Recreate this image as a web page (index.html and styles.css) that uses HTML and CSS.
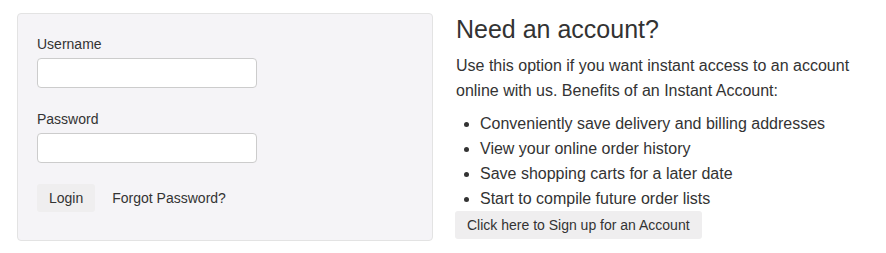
FILE: index.html
```html
<!DOCTYPE html>
<html lang="en">

<head>
  <meta charset="UTF-8">
  <meta name="viewport" content="width=device-width, initial-scale=1.0">
  <title>Login</title>
  <link rel="stylesheet" href="styles.css">
</head>

<body>
  <div class="page">
    <form class="login-box" onsubmit="return false">
      <div class="form-group">
        <label for="username">Username</label>
        <input type="text" id="username" name="username">
      </div>

      <div class="form-group">
        <label for="password">Password</label>
        <input type="password" id="password" name="password">
      </div>

      <div class="actions">
        <button type="submit" class="btn">Login</button>
        <a href="#" class="forgot">Forgot Password?</a>
      </div>
    </form>

    <div class="signup">
      <h2>Need an account?</h2>
      <p>Use this option if you want instant access to an account online with us. Benefits of an Instant Account:</p>
      <ul>
        <li>Conveniently save delivery and billing addresses</li>
        <li>View your online order history</li>
        <li>Save shopping carts for a later date</li>
        <li>Start to compile future order lists</li>
      </ul>
      <button type="button" class="btn btn-signup">Click here to Sign up for an Account</button>
    </div>
  </div>
</body>

</html>
```

FILE: styles.css
```css
body {
  margin: 0;
  padding: 0;
  font-family: "Liberation Sans", Arial, sans-serif;
  color: #333;
  background-color: #fff;
}

.page {
  display: flex;
  align-items: flex-start;
  padding: 13px 0 0 17px;
}

/* left panel */
.login-box {
  width: 375px;
  padding: 20px 20px 28px 19px;
  background-color: #f5f4f7;
  border: 1px solid #e3e3e3;
  border-radius: 4px;
}

.form-group {
  margin-bottom: 21px;
}

.form-group label {
  display: block;
  font-size: 14px;
  line-height: 20px;
  margin-bottom: 4px;
}

.form-group input {
  display: block;
  box-sizing: border-box;
  width: 220px;
  height: 30px;
  padding: 4px 8px;
  border: 1px solid #ccc;
  border-radius: 4px;
  background-color: #fff;
  font-size: 14px;
}

.actions {
  display: flex;
  align-items: center;
  gap: 17px;
}

.btn {
  font-family: "Liberation Sans", Arial, sans-serif;
  font-size: 14px;
  color: #333;
  height: 28px;
  padding: 0 12px;
  border: none;
  border-radius: 3px;
  background-color: #efeeef;
  cursor: pointer;
}

.forgot {
  font-size: 14px;
  color: #333;
  text-decoration: none;
}

/* right column */
.signup {
  margin-left: 23px;
  flex: 1;
}

.signup h2 {
  font-size: 25px;
  font-weight: normal;
  line-height: 28px;
  margin: 2px 0 10px 0;
}

.signup p {
  font-size: 16px;
  line-height: 25px;
  margin: 0 0 8px 0;
}

.signup ul {
  font-size: 16px;
  line-height: 25px;
  margin: 0;
  padding-left: 24px;
}

.btn-signup {
  display: block;
  margin-left: -1px;
}
```
